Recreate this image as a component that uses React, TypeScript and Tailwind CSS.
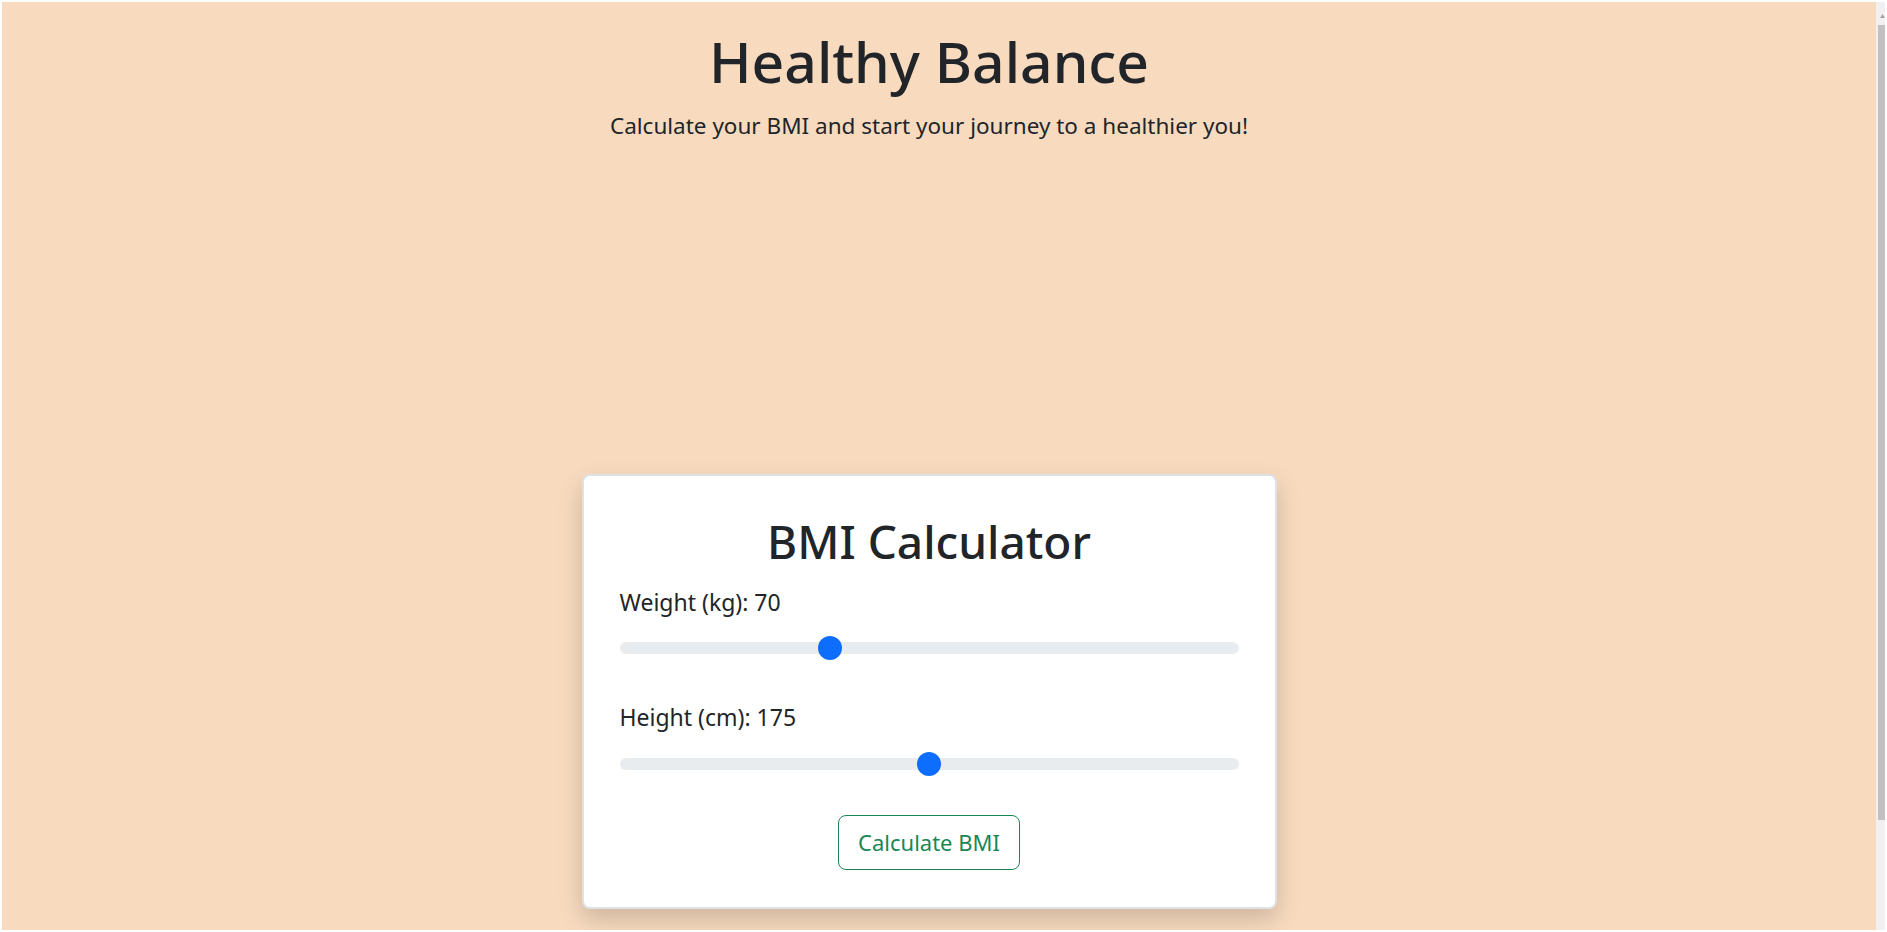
import React from "react";

function Slider({ value, min, max }: { value: number; min: number; max: number }) {
  const frac = (value - min) / (max - min);
  return (
    <div className="relative h-[24px] w-full flex items-center">
      <div className="h-[12px] w-full rounded-full bg-[#e9ecef]" />
      <div
        className="absolute top-0 h-[24px] w-[24px] rounded-full bg-[#0d6efd]"
        style={{ left: `calc((100% - 24px) * ${frac})` }}
      />
    </div>
  );
}

export default function App() {
  return (
    <div
      className="h-[932px] w-full bg-white p-[2px] overflow-hidden"
      style={{ fontFamily: '"Noto Sans", "Open Sans", sans-serif' }}
    >
      <div className="flex h-full w-full">
        <main className="flex-1 h-full bg-[#f8dbbf] pr-[20px] overflow-hidden text-[#212529]">
          <div className="flex flex-col items-center">
            <h1 className="mt-[25px] text-[57px] leading-[1.2] font-medium">Healthy Balance</h1>
            <p className="mt-[14px] text-[22.5px] leading-[1.5]">
              Calculate your BMI and start your journey to a healthier you!
            </p>
            <div className="mt-[331px] w-[695px] rounded-[8px] border-2 border-[#dee2e6] bg-white px-[36px] pt-[38px] pb-[37px] shadow-[0_10px_25px_rgba(0,0,0,0.18)]">
              <h2 className="text-center text-[46px] leading-[1.2] font-medium">BMI Calculator</h2>
              <div className="mt-[16px] text-[23px] leading-[1.5]">Weight (kg): 70</div>
              <div className="mt-[16px]">
                <Slider value={70} min={30} max={150} />
              </div>
              <div className="mt-[40px] text-[23px] leading-[1.5]">Height (cm): 175</div>
              <div className="mt-[18px]">
                <Slider value={175} min={100} max={250} />
              </div>
              <div className="mt-[39px] flex justify-center">
                <button className="rounded-[8px] border border-[#198754] bg-white px-[19px] py-[10px] text-[22px] leading-[1.5] text-[#198754]">
                  Calculate BMI
                </button>
              </div>
            </div>
          </div>
        </main>
        <div className="relative h-full w-[9px] bg-[#f0f0f0]">
          <svg className="absolute left-[4px] top-[12px]" width="5" height="4" viewBox="0 0 5 4">
            <path d="M0 4 L2.5 0 L5 4 Z" fill="#a3a3a3" />
          </svg>
          <div className="absolute left-[2px] right-0 top-[23px] h-[795px] bg-[#c1c1c1]" />
        </div>
      </div>
    </div>
  );
}
